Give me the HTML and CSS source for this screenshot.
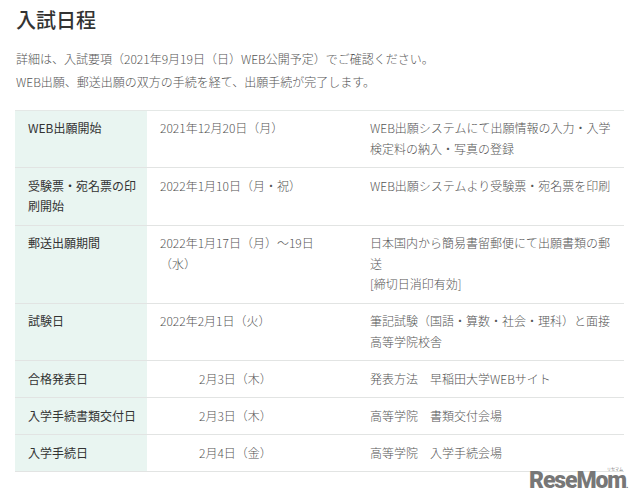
FILE: index.html
```html
<!DOCTYPE html>
<html lang="ja">
<head>
<meta charset="utf-8">
<title>入試日程</title>
<link rel="stylesheet" href="styles.css">
</head>
<body>
<main class="page">
  <h1 class="title">入試日程</h1>
  <div class="intro">
    <p>詳細は、入試要項（2021年9月19日（日）WEB公開予定）でご確認ください。</p>
    <p>WEB出願、郵送出願の双方の手続を経て、出願手続が完了します。</p>
  </div>
  <div class="schedule">
    <div class="row">
      <div class="head">WEB出願開始</div>
      <div class="date">2021年12月20日（月）</div>
      <div class="note">WEB出願システムにて出願情報の入力・入学検定料の納入・写真の登録</div>
    </div>
    <div class="row">
      <div class="head">受験票・宛名票の印刷開始</div>
      <div class="date">2022年1月10日（月・祝）</div>
      <div class="note">WEB出願システムより受験票・宛名票を印刷</div>
    </div>
    <div class="row">
      <div class="head">郵送出願期間</div>
      <div class="date">2022年1月17日（月）〜19日（水）</div>
      <div class="note">日本国内から簡易書留郵便にて出願書類の郵送<br>[締切日消印有効]</div>
    </div>
    <div class="row">
      <div class="head">試験日</div>
      <div class="date">2022年2月1日（火）</div>
      <div class="note">筆記試験（国語・算数・社会・理科）と面接<br>高等学院校舎</div>
    </div>
    <div class="row">
      <div class="head">合格発表日</div>
      <div class="date indent">2月3日（木）</div>
      <div class="note">発表方法　早稲田大学WEBサイト</div>
    </div>
    <div class="row">
      <div class="head">入学手続書類交付日</div>
      <div class="date indent">2月3日（木）</div>
      <div class="note">高等学院　書類交付会場</div>
    </div>
    <div class="row">
      <div class="head">入学手続日</div>
      <div class="date indent">2月4日（金）</div>
      <div class="note">高等学院　入学手続会場</div>
    </div>
  </div>
</main>
<div class="logo"><span class="logo-kana">リセマム</span>ReseMom<span class="logo-dot">.</span></div>
</body>
</html>
```

FILE: styles.css
```css
html, body {
  margin: 0;
  padding: 0;
  background: #fff;
}
body {
  position: relative;
  width: 640px;
  height: 503px;
  overflow: hidden;
  font-family: "Noto Sans CJK JP", "Noto Sans", sans-serif;
  font-size: 12px;
  color: #555;
}
.page {
  padding: 5px 16px 0 15px;
}
.title {
  margin: 0 0 0 1px;
  font-size: 20px;
  line-height: 29px;
  font-weight: 500;
  color: #333;
}
.intro {
  margin-top: 13px;
  padding-left: 1px;
  font-weight: 300;
}
.intro p {
  margin: 0;
  line-height: 23px;
}
.schedule {
  margin-top: 16.6px;
  border-top: 1px solid #e4e8e6;
}
.row {
  display: grid;
  grid-template-columns: 132px 210px 1fr;
  border-bottom: 1px solid #e2e4e3;
  line-height: 20.5px;
}
.head {
  padding: 7.5px 10px 8px 13px;
  background: #e9f5f1;
  font-weight: 400;
  color: #333;
}
.date {
  padding: 7.5px 23px 8px 13px;
  font-weight: 300;
}
.indent {
  padding-left: 52px;
}
.note {
  padding: 7.5px 12px 8px 13px;
  font-weight: 300;
}
.logo {
  position: absolute;
  left: 529px;
  top: 472px;
  font-family: "Roboto", sans-serif;
  font-size: 23px;
  line-height: 18px;
  font-weight: 900;
  letter-spacing: -1.1px;
  color: #777;
}
.logo-kana {
  position: absolute;
  left: 78px;
  top: -5px;
  font-family: "Noto Sans CJK JP", sans-serif;
  font-size: 4px;
  line-height: 5px;
  font-weight: 400;
  letter-spacing: 0;
  color: #777;
}
.logo-dot {
  font-size: 8px;
}
```
